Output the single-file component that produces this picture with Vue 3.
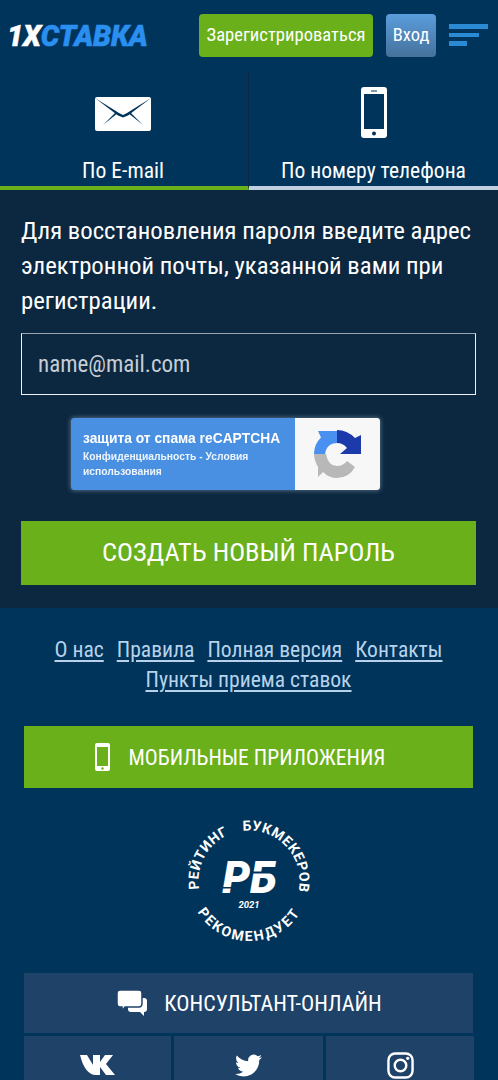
<template>
  <div class="page">
    <header class="top">
      <div class="logo"><span class="logo-white">1X</span><span class="logo-blue">СТАВКА</span></div>
      <a class="btn-reg">Зарегистрироваться</a>
      <a class="btn-login">Вход</a>
      <div class="burger"><i></i><i></i><i></i></div>
    </header>

    <div class="tabs">
      <div class="tab tab-active">
        <svg class="ico-mail" viewBox="0 0 56 34">
          <rect width="56" height="34" rx="2" fill="#fff" />
          <path d="M0 1 L24 16 L28 18 L32 16 L56 1 L33 18.500 L28 20.500 L23 18.500 Z" fill="#00345a" />
          <path d="M8 28 L20.500 15.500 L22 16.800 Z M48 28 L35.500 15.500 L34 16.800 Z" fill="#00345a" />
        </svg>
        <span>По E-mail</span>
      </div>
      <div class="tab">
        <svg class="ico-phone" viewBox="0 0 26 51">
          <rect width="26" height="51" rx="3" fill="#fff" />
          <rect x="3" y="7" width="20" height="35" fill="#00345a" />
          <circle cx="13" cy="46.500" r="2" fill="#00345a" />
          <rect x="10" y="3.500" width="6" height="1" fill="#00345a" />
        </svg>
        <span>По номеру телефона</span>
      </div>
    </div>

    <section class="form">
      <p class="hint">Для восстановления пароля введите адрес электронной почты, указанной вами при регистрации.</p>
      <div class="field">name@mail.com</div>
      <div class="captcha">
        <div class="captcha-text">
          <b>защита от спама reCAPTCHA</b>
          <small>Конфиденциальность - Условия использования</small>
        </div>
        <div class="captcha-logo">
          <svg width="65" height="65" viewBox="0 0 65 65">
            <path d="M9 32 A23 23 0 0 1 16 15.500 L13 9 H32 V21 Q24 21 21 28 L20 32 Z" fill="#4a90f0" />
            <path d="M32 8 Q42 8 50 16 L56 13 V32 H35 L42 26 Q38 21 32 21 Z" fill="#1c3aa9" />
            <path d="M9 32 H21 Q23 44 32 44 Q38 44 42 39 L50 45 Q44 56 32 56 Q24 56 18 50 L13 55 V45 Q9 38 9 32 Z" fill="#b8b8b8" />
          </svg>
        </div>
      </div>
      <a class="btn-create">СОЗДАТЬ НОВЫЙ ПАРОЛЬ</a>
    </section>

    <footer class="foot">
      <nav class="links">
        <a v-for="link in links" :key="link">{{ link }}</a>
      </nav>
      <a class="btn-app">
        <svg width="15" height="28" viewBox="0 0 15 28">
          <rect width="15" height="28" rx="2" fill="#fff" />
          <rect x="2" y="4" width="11" height="19" fill="#6ab01a" />
          <circle cx="7.500" cy="25.500" r="1.200" fill="#6ab01a" />
        </svg>
        МОБИЛЬНЫЕ ПРИЛОЖЕНИЯ
      </a>

      <svg class="badge" width="130" height="130" viewBox="0 0 130 130">
        <defs>
          <path id="arcTop" d="M15.270 73.770 A50.500 50.500 0 1 1 114.730 73.770" />
          <path id="arcBottom" d="M5.900 75.400 A60 60 0 0 0 124.100 75.400" />
        </defs>
        <text class="badge-text" letter-spacing="0.500">
          <textPath href="#arcTop" startOffset="19.250%" text-anchor="middle">РЕЙТИНГ</textPath>
        </text>
        <text class="badge-text" letter-spacing="0.500">
          <textPath href="#arcTop" startOffset="73.750%" text-anchor="middle">БУКМЕКЕРОВ</textPath>
        </text>
        <text class="badge-text" letter-spacing="2">
          <textPath href="#arcBottom" startOffset="50%" text-anchor="middle">РЕКОМЕНДУЕТ</textPath>
        </text>
        <text class="badge-rb" x="65.500" y="77" text-anchor="middle">РБ</text>
        <rect x="38" y="71" width="12" height="1.500" fill="#00345a" />
        <rect x="66" y="55.500" width="30" height="2" fill="#00345a" />
        <text class="badge-year" x="65" y="92" text-anchor="middle">2021</text>
      </svg>

      <a class="consult">
        <svg width="30" height="26" viewBox="0 0 30 26">
          <path d="M14 8 H27 Q30 8 30 11 V19 Q30 22 27 22 V26 L23 22 H14 Q11 22 11 19 V11 Q11 8 14 8 Z" fill="#fff" />
          <path d="M3 0 H22 Q25 0 25 3 V13 Q25 17 22 17 H8 L5 21 V17 H3 Q0 17 0 13 V3 Q0 0 3 0 Z" fill="#fff" stroke="#1f4268" stroke-width="1.500" />
        </svg>
        КОНСУЛЬТАНТ-ОНЛАЙН
      </a>

      <div class="social">
        <div class="cell">
          <svg width="35" height="20" viewBox="0 0 35 20">
            <path d="M0 0 H7 L13 10 V0 H20 V7 L25 0 H33 L26 9 L35 20 H26 L20 12 V20 H16 C8 20 3 12 0 0 Z" fill="#fff" />
          </svg>
        </div>
        <div class="cell">
          <svg width="27" height="27" viewBox="0 0 24 24">
            <path d="M23.953 4.570a10 10 0 01-2.825.775 4.958 4.958 0 002.163-2.723c-.951.555-2.005.959-3.127 1.184a4.920 4.920 0 00-8.384 4.482C7.690 8.095 4.067 6.130 1.640 3.162a4.822 4.822 0 00-.666 2.475c0 1.710.870 3.213 2.188 4.096a4.904 4.904 0 01-2.228-.616v.060a4.923 4.923 0 003.946 4.827 4.996 4.996 0 01-2.212.085 4.936 4.936 0 004.604 3.417 9.867 9.867 0 01-6.102 2.105c-.390 0-.779-.023-1.170-.067a13.995 13.995 0 007.557 2.209c9.053 0 13.998-7.496 13.998-13.985 0-.210 0-.420-.015-.630A9.935 9.935 0 0024 4.590z" fill="#fff" />
          </svg>
        </div>
        <div class="cell">
          <svg width="27" height="27" viewBox="0 0 28 28">
            <rect x="1.500" y="1.500" width="25" height="25" rx="7" fill="none" stroke="#fff" stroke-width="2.500" />
            <circle cx="14" cy="14" r="6" fill="none" stroke="#fff" stroke-width="2.500" />
            <circle cx="21.500" cy="6.500" r="1.700" fill="#fff" />
          </svg>
        </div>
      </div>
    </footer>
  </div>
</template>

<script setup>
const links = ['О нас', 'Правила', 'Полная версия', 'Контакты', 'Пункты приема ставок']
</script>

<style>
html, body {
  background: #00345a;
}
</style>

<style scoped>
.page {
  width: 498px;
  height: 1080px;
  overflow: hidden;
  background: #00345a;
  color: #fff;
  font-family: Roboto, "Liberation Sans", sans-serif;
  font-stretch: 75%;
}

.top {
  height: 72px;
  display: flex;
  align-items: center;
  padding: 0 10px 0 7px;
}

.logo {
  flex: 1;
  font-size: 29px;
  font-weight: 900;
  font-style: italic;
  font-stretch: 100%;
  letter-spacing: -0.300px;
  -webkit-text-stroke: 0.500px currentColor;
}

.logo-white {
  color: #fff;
}

.logo-blue {
  color: #2b8ff0;
}

.btn-reg {
  width: 174px;
  height: 43px;
  margin-top: -1px;
  line-height: 43px;
  text-align: center;
  background: #6ab01a;
  border-radius: 4px;
  font-size: 18.600px;
}

.btn-login {
  width: 50px;
  height: 43px;
  margin: -1px 13px 0 13px;
  line-height: 43px;
  text-align: center;
  background: linear-gradient(#5a9ddc, #45719c);
  border-radius: 4px;
  font-size: 18.500px;
}

.burger {
  width: 39px;
  display: flex;
  flex-direction: column;
  gap: 4px;
  margin-top: -2px;
}

.burger i {
  display: block;
  height: 5px;
  background: #2a8ad4;
}

.burger i:nth-child(2) {
  width: 30px;
  height: 4px;
}

.burger i:nth-child(3) {
  width: 18px;
}

.tabs {
  height: 118px;
  display: grid;
  grid-template-columns: 249px 249px;
}

.tab {
  display: flex;
  flex-direction: column;
  align-items: center;
  justify-content: flex-end;
  border-bottom: 4px solid #c0d0e0;
  font-size: 21.600px;
}

.tab span {
  line-height: 30px;
}

.tab-active {
  padding-right: 2px;
  border-bottom-color: #6ab01a;
  border-right: 1px solid #0c2840;
}

.ico-mail {
  width: 56px;
  height: 34px;
  margin-bottom: 25px;
}

.ico-phone {
  width: 26px;
  height: 51px;
  margin-bottom: 18px;
}

.form {
  height: 418px;
  padding: 23px 22px 0 21px;
  box-sizing: border-box;
  background: #0c2840;
}

.hint {
  margin: 0;
  font-size: 24.750px;
  line-height: 35px;
}

.field {
  height: 62px;
  margin-top: 15px;
  padding-left: 16px;
  box-sizing: border-box;
  border: 1px solid #eef1f4;
  border-top-color: #9aa5af;
  line-height: 62px;
  font-size: 23px;
  color: #c5ced6;
}

.captcha {
  width: 309px;
  height: 72px;
  margin: 23px 0 0 50px;
  display: flex;
  border-radius: 3px;
  overflow: hidden;
  box-shadow: 0 0 5px rgba(200, 220, 240, 0.5);
  font-stretch: 100%;
}

.captcha-text {
  width: 224px;
  padding: 13px 0 0 12px;
  box-sizing: border-box;
  background: #4a90e2;
  font-family: "Liberation Sans", sans-serif;
}

.captcha-text b {
  display: block;
  font-size: 13.800px;
  line-height: 16px;
  font-weight: 700;
  filter: blur(0.300px);
}

.captcha-text small {
  display: block;
  margin-top: 2px;
  font-size: 10.300px;
  line-height: 15px;
  font-weight: 700;
  opacity: 0.9;
  filter: blur(0.300px);
}

.captcha-logo {
  flex: 1;
  display: flex;
  align-items: center;
  justify-content: center;
  background: #f7f7f7;
}

.btn-create {
  display: block;
  height: 64px;
  margin-top: 31px;
  line-height: 62px;
  text-align: center;
  background: #6ab01a;
  font-size: 26.500px;
}

.foot {
  padding: 27px 25px 0 24px;
}

.links {
  display: flex;
  flex-wrap: wrap;
  justify-content: center;
  column-gap: 13px;
  font-size: 21.600px;
  line-height: 30px;
}

.links a {
  color: #b7d2ea;
  text-decoration: underline;
  text-underline-offset: 3px;
}

.btn-app {
  height: 62px;
  margin-top: 31px;
  padding-right: 16px;
  display: flex;
  align-items: center;
  justify-content: center;
  gap: 18px;
  background: #6ab01a;
  font-size: 21.600px;
}

.badge {
  display: block;
  margin: 28px auto 0 auto;
}

.badge-text {
  font-size: 14px;
  font-weight: 700;
  fill: #fff;
  font-stretch: 100%;
}

.badge-rb {
  font-size: 44px;
  font-weight: 900;
  font-style: italic;
  fill: #fff;
  font-stretch: 100%;
}

.badge-year {
  font-size: 9.500px;
  font-weight: 700;
  font-style: italic;
  fill: #fff;
  font-stretch: 100%;
}

.consult {
  height: 60px;
  margin-top: 27px;
  padding-left: 2px;
  display: flex;
  align-items: center;
  justify-content: center;
  gap: 17px;
  background: #1f4268;
  font-size: 22px;
}

.social {
  margin-top: 3px;
  display: grid;
  grid-template-columns: 147px 149px 148px;
  gap: 3px;
}

.cell {
  height: 58px;
  display: flex;
  align-items: center;
  justify-content: center;
  background: #1f4268;
}
</style>
